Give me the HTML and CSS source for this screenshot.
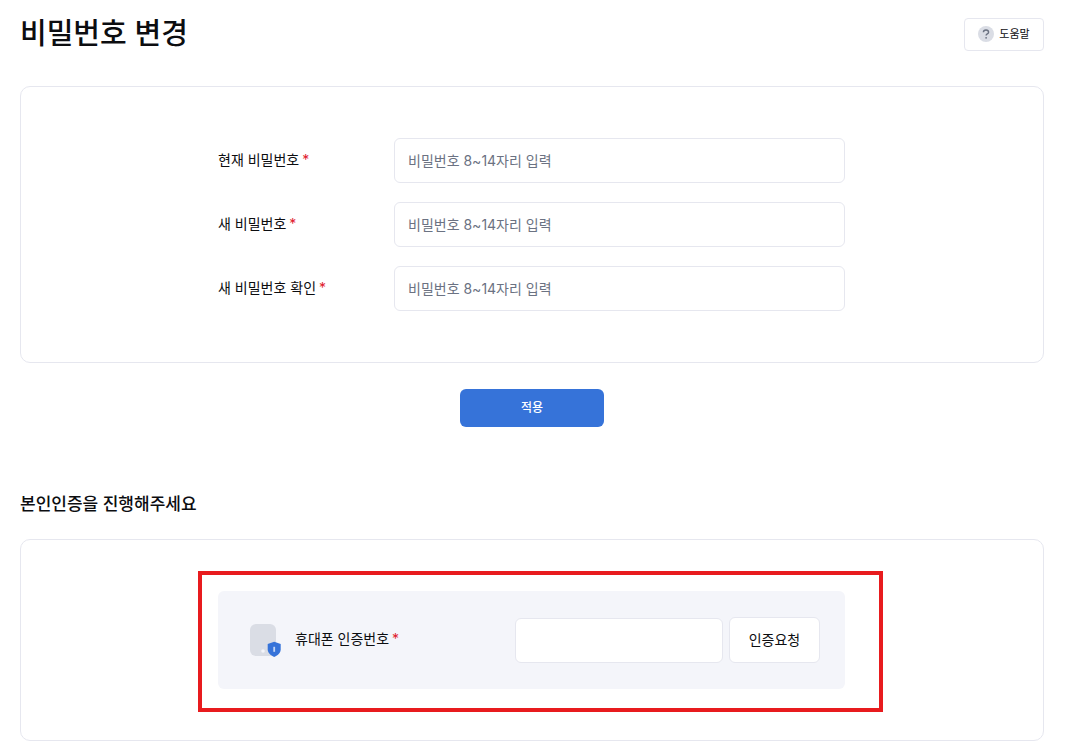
FILE: index.html
```html
<!DOCTYPE html>
<html lang="ko">
<head>
  <meta charset="UTF-8">
  <meta name="viewport" content="width=device-width, initial-scale=1">
  <title>비밀번호 변경</title>
  <link rel="stylesheet" href="styles.css">
</head>
<body>
<main class="container">
  <header class="page-header">
    <h1>비밀번호 변경</h1>
    <button type="button" class="help-btn">
      <svg width="16" height="16" viewBox="0 0 16 16" aria-hidden="true">
        <circle cx="8" cy="8" r="8" fill="#dadde5"/>
        <path d="M5.4 6.3C5.4 4.8 6.5 4 8 4s2.6.8 2.6 2.2c0 1.7-2.5 1.6-2.5 3.2" fill="none" stroke="#6b7282" stroke-width="1.4"/>
        <circle cx="8.1" cy="11.8" r=".9" fill="#6b7282"/>
      </svg>
      도움말
    </button>
  </header>

  <form id="password-form">
    <div class="card">
      <div class="fields">
        <div class="row">
          <label for="current-pw">현재 비밀번호<span class="required">*</span></label>
          <input type="password" id="current-pw" placeholder="비밀번호 8~14자리 입력">
        </div>
        <div class="row">
          <label for="new-pw">새 비밀번호<span class="required">*</span></label>
          <input type="password" id="new-pw" placeholder="비밀번호 8~14자리 입력">
        </div>
        <div class="row">
          <label for="confirm-pw">새 비밀번호 확인<span class="required">*</span></label>
          <input type="password" id="confirm-pw" placeholder="비밀번호 8~14자리 입력">
        </div>
      </div>
    </div>
    <button type="submit" class="apply-btn">적용</button>
  </form>

  <h2>본인인증을 진행해주세요</h2>
  <div class="card">
    <form class="verify">
      <svg class="phone-icon" width="32" height="34" viewBox="0 0 32 34" aria-hidden="true">
        <rect x="0" y="1" width="26" height="32" rx="6" fill="#dadde5"/>
        <circle cx="13" cy="28" r="1.8" fill="#f4f5fa"/>
        <path d="M24.2 18.8l6.5 2.3v5.2c0 3.6-2.6 6-6.5 7.7-3.9-1.7-6.5-4.1-6.5-7.7v-5.2z" fill="#3673d9"/>
        <rect x="23.3" y="23.8" width="1.8" height="5" fill="#c3d5f4"/>
      </svg>
      <label for="phone-code">휴대폰 인증번호<span class="required">*</span></label>
      <input type="text" id="phone-code">
      <button type="button" class="request-btn">인증요청</button>
    </form>
  </div>
</main>
</body>
</html>
```
FILE: styles.css
```css
* {
  box-sizing: border-box;
}
body {
  margin: 0;
  background-color: #fff;
  color: #0c0d10;
  font-family: Inter, "Noto Sans CJK KR", sans-serif;
  font-size: 14px;
  font-weight: 400;
  line-height: 20px;
}
.container {
  padding: 12px 21px 14px 20px;
}
button,
input {
  font: inherit;
  color: inherit;
  border: 1px solid #e6e7ef;
  border-radius: 6px;
  background-color: #fff;
}
button {
  cursor: pointer;
}
.page-header {
  display: flex;
  justify-content: space-between;
  align-items: center;
  height: 44px;
  margin-bottom: 30px;
}
h1 {
  margin: 0;
  font-size: 29px;
  font-weight: 500;
  line-height: 44px;
}
h2 {
  margin: 64px 0 22px;
  font-size: 17px;
  font-weight: 500;
  line-height: 26px;
}
.help-btn {
  display: flex;
  justify-content: center;
  align-items: center;
  gap: 5px;
  width: 80px;
  height: 33px;
  padding: 0;
  border-radius: 4px;
  font-size: 11px;
}
.card {
  padding: 51px 21px 51px 20px;
  border: 1px solid #e6e7ef;
  border-radius: 10px;
}
.fields,
.verify {
  max-width: 627px;
  margin: 0 auto;
}
.fields {
  display: flex;
  flex-direction: column;
  gap: 19px;
}
.row {
  display: flex;
  align-items: center;
}
label {
  padding-bottom: 2px;
}
.row label {
  width: 176px;
}
.row input {
  flex: 1;
  min-width: 0;
  height: 45px;
  padding: 0 13px;
}
input::placeholder {
  color: #6b7282;
  opacity: 1;
}
.required {
  margin-left: 3px;
  color: #e0202c;
}
.apply-btn {
  display: block;
  width: 144px;
  height: 38px;
  margin: 26px auto 0;
  padding: 0;
  border: none;
  background-color: #3673d9;
  color: #fff;
  font-size: 12px;
  font-weight: 500;
}
.verify {
  position: relative;
  display: flex;
  align-items: center;
  padding: 26px 25px 26px 32px;
  border-radius: 6px;
  background-color: #f4f5fa;
}
/* red guide frame around the verification box */
.verify::after {
  content: "";
  position: absolute;
  top: -20px;
  right: -38px;
  bottom: -23px;
  left: -20px;
  border: 4px solid #e81b1e;
  pointer-events: none;
}
.phone-icon {
  flex: none;
  margin-right: 13px;
}
.verify label {
  flex: 1;
}
.verify input {
  width: 208px;
  height: 45px;
  padding: 0 13px;
}
.request-btn {
  width: 91px;
  height: 46px;
  margin-left: 6px;
  padding: 0;
}
```
